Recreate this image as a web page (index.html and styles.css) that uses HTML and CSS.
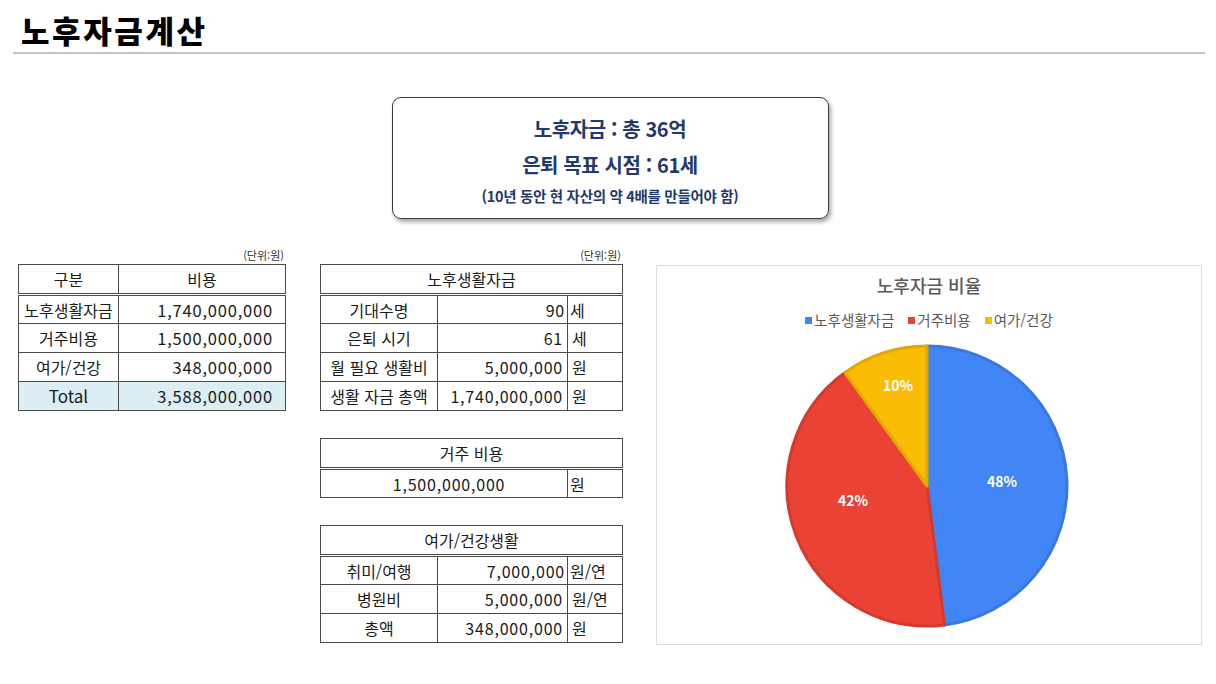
FILE: index.html
```html
<!DOCTYPE html>
<html lang="ko">
<head>
<meta charset="utf-8">
<title>노후자금계산</title>
<link rel="stylesheet" href="styles.css">
</head>
<body>
<header class="page-head">
  <h1 class="page-title">노후자금계산</h1>
</header>

<section class="summary-wrap">
  <div class="summary">
    <p class="sum-line">노후자금 : 총 36억</p>
    <p class="sum-line">은퇴 목표 시점 : 61세</p>
    <p class="sum-note">(10년 동안 현 자산의 약 4배를 만들어야 함)</p>
  </div>
</section>

<main class="content">
  <div class="col-left">
    <div class="unit">(단위:원)</div>
    <table class="grid t-left">
      <thead>
        <tr><th class="c-name">구분</th><th class="c-cost">비용</th></tr>
      </thead>
      <tbody>
        <tr><td class="center">노후생활자금</td><td class="num pr">1,740,000,000</td></tr>
        <tr><td class="center">거주비용</td><td class="num pr">1,500,000,000</td></tr>
        <tr><td class="center">여가/건강</td><td class="num pr">348,000,000</td></tr>
        <tr class="total"><td class="center">Total</td><td class="num pr">3,588,000,000</td></tr>
      </tbody>
    </table>
  </div>

  <div class="col-mid">
    <div class="unit">(단위:원)</div>
    <table class="grid t-mid">
      <thead>
        <tr><th colspan="3">노후생활자금</th></tr>
      </thead>
      <tbody>
        <tr><td class="center m-label">기대수명</td><td class="num m-val">90</td><td class="m-unit">세</td></tr>
        <tr><td class="center">은퇴 시기</td><td class="num">61</td><td>세</td></tr>
        <tr><td class="center">월 필요 생활비</td><td class="num">5,000,000</td><td>원</td></tr>
        <tr><td class="center">생활 자금 총액</td><td class="num">1,740,000,000</td><td>원</td></tr>
      </tbody>
    </table>

    <table class="grid t-mid gap-top">
      <thead>
        <tr><th colspan="2">거주 비용</th></tr>
      </thead>
      <tbody>
        <tr><td class="center span-val">1,500,000,000</td><td class="m-unit">원</td></tr>
      </tbody>
    </table>

    <table class="grid t-mid gap-top">
      <thead>
        <tr><th colspan="3">여가/건강생활</th></tr>
      </thead>
      <tbody>
        <tr><td class="center m-label">취미/여행</td><td class="num m-val">7,000,000</td><td class="m-unit">원/연</td></tr>
        <tr><td class="center">병원비</td><td class="num">5,000,000</td><td>원/연</td></tr>
        <tr><td class="center">총액</td><td class="num">348,000,000</td><td>원</td></tr>
      </tbody>
    </table>
  </div>

  <div class="chart">
    <h2 class="chart-title">노후자금 비율</h2>
    <ul class="legend">
      <li><span class="sw sw-blue"></span>노후생활자금</li>
      <li><span class="sw sw-red"></span>거주비용</li>
      <li><span class="sw sw-yellow"></span>여가/건강</li>
    </ul>
    <svg class="pie" width="290" height="290" viewBox="-145 -145 290 290">
      <path d="M0,0 L0,-140 A140,140 0 0 1 17.5,138.9 Z" fill="#4285f4" stroke="#3b78de" stroke-width="3" stroke-linejoin="round"/>
      <path d="M0,0 L17.5,138.9 A140,140 0 0 1 -82.3,-113.3 Z" fill="#ea4335" stroke="#d33a2d" stroke-width="3" stroke-linejoin="round"/>
      <path d="M0,0 L-82.3,-113.3 A140,140 0 0 1 0,-140 Z" fill="#fbbc04" stroke="#e3a902" stroke-width="3" stroke-linejoin="round"/>
      <text x="75" y="-5" class="pl">48%</text>
      <text x="-74" y="14" class="pl">42%</text>
      <text x="-29" y="-101" class="pl">10%</text>
    </svg>
  </div>
</main>
</body>
</html>
```

FILE: styles.css
```css
* { box-sizing: border-box; }
html, body { margin: 0; padding: 0; }
body {
  width: 1216px;
  height: 684px;
  background: #ffffff;
  font-family: "Noto Sans CJK KR", "Noto Sans", sans-serif;
  color: #1a1a1a;
  overflow: hidden;
}
.page-head {
  margin: 0 11px 0 13px;
  padding: 10px 0 0 8px;
  height: 54px;
  border-bottom: 2px solid #c4c4c4;
}
.page-title {
  margin: 0;
  font-size: 31px;
  font-weight: 900;
  line-height: 40px;
  letter-spacing: 2.6px;
  color: #000;
}
.summary-wrap {
  display: flex;
  justify-content: center;
  padding: 43px 0 0 4px;
}
.summary {
  width: 437px;
  height: 122px;
  border: 1.5px solid #3a3a3a;
  border-radius: 9px;
  box-shadow: 2px 3px 4px rgba(0,0,0,0.35);
  display: flex;
  flex-direction: column;
  align-items: center;
  padding-top: 13px;
  color: #1f3a6b;
}
.sum-line {
  margin: 0;
  font-size: 20px;
  font-weight: 700;
  line-height: 36px;
  letter-spacing: -0.4px;
}
.sum-note {
  margin: 0;
  font-size: 14.5px;
  font-weight: 700;
  line-height: 26px;
  letter-spacing: -0.3px;
}
.content {
  display: flex;
  align-items: flex-start;
  padding: 27px 0 0 18px;
}
.col-left { width: 268px; }
.col-mid { width: 303px; margin-left: 34px; }
.unit {
  text-align: right;
  font-size: 11px;
  line-height: 18px;
  color: #333;
  padding-right: 2px;
}
.grid {
  border-collapse: collapse;
  width: 100%;
  font-size: 16px;
  color: #1a1a1a;
}
.grid th, .grid td {
  border: 1px solid #4a4a4a;
  height: 29px;
  padding: 0 4px;
  font-weight: 400;
  line-height: 20px;
  white-space: nowrap;
}
.grid thead th {
  border-bottom: 3px double #4a4a4a;
  height: 30px;
  text-align: center;
}
.center { text-align: center; }
.num { text-align: right; letter-spacing: 0.8px; }
.pr { padding-right: 12px !important; font-size: 16.5px; }
.c-name { width: 100px; }
.total td { background: #daeef3; }
.total .center { font-size: 17px; }
.m-label { width: 117px; }
.m-val { width: 130px; padding-right: 2px !important; }
.m-unit { width: 55px; padding-left: 2px !important; }
.span-val { text-align: center; letter-spacing: 0.8px; padding-left: 14px !important; }
.gap-top { margin-top: 27px; }
.gap-top + .gap-top { margin-top: 27px; }
.chart {
  width: 546px;
  height: 380px;
  margin-left: 33px;
  margin-top: 19px;
  border: 1px solid #dcdcdc;
  display: flex;
  flex-direction: column;
  align-items: center;
}
.chart-title {
  margin: 5px 0 0;
  font-size: 18px;
  font-weight: 500;
  line-height: 28px;
  color: #595959;
}
.legend {
  list-style: none;
  margin: 10px 0 0;
  padding: 0;
  display: flex;
  gap: 14px;
  font-size: 14.5px;
  line-height: 22px;
  color: #595959;
}
.legend li { display: flex; align-items: center; }
.sw { width: 7px; height: 7px; margin-right: 2px; }
.sw-blue { background: #4285f4; }
.sw-red { background: #ea4335; }
.sw-yellow { background: #fbbc04; }
.pie { margin-top: 10px; margin-left: -4px; }
.pl {
  fill: #ffffff;
  font-size: 14px;
  font-weight: 700;
  text-anchor: middle;
  dominant-baseline: central;
  font-family: "Noto Sans CJK KR", "Noto Sans", sans-serif;
}
```
